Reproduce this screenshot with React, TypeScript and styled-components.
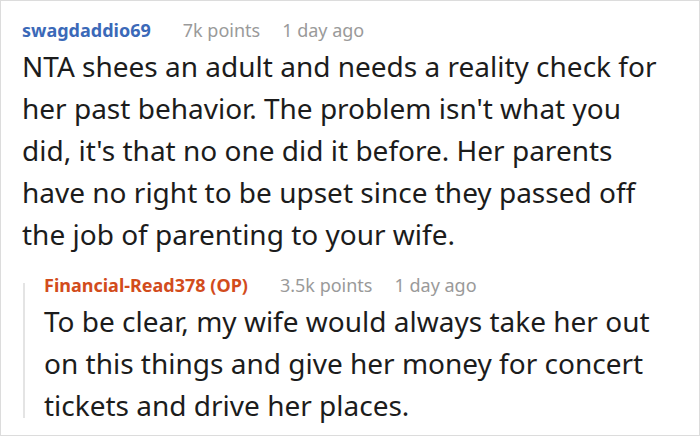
import React from "react";
import styled, { createGlobalStyle } from "styled-components";

const Global = createGlobalStyle`
  html, body { margin: 0; padding: 0; background: #fff; }
  * { box-sizing: border-box; }
`;

const Frame = styled.div`
  width: 700px;
  height: 436px;
  border: 1px solid #dcdcdc;
  padding: 14px 39px 0 21px;
  font-family: "Noto Sans", "Open Sans", sans-serif;
  background: #fff;
  overflow: hidden;
`;

const Header = styled.div`
  display: flex;
  align-items: baseline;
  height: 30px;
  line-height: 30px;
  font-size: 18px;
  white-space: nowrap;
`;

const User = styled.span<{ $op?: boolean }>`
  font-weight: 700;
  color: ${(p) => (p.$op ? "#d24c1c" : "#3b69b8")};
`;

const Meta = styled.span<{ $gap: number }>`
  color: #9a9a9a;
  margin-left: ${(p) => p.$gap}px;
`;

const Body = styled.p`
  margin: 0;
  font-size: 28px;
  line-height: 42px;
  color: #1c1c1c;
`;

const Reply = styled.div`
  display: flex;
  margin-top: 15px;
`;

const Rail = styled.div`
  width: 2px;
  flex: none;
  margin: 13px 0 8px 1px;
  background: #e4e4e4;
`;

const ReplyContent = styled.div`
  margin-left: 19px;
  flex: 1;
`;

export default function App() {
  return (
    <>
      <Global />
      <Frame>
        <Header>
          <User>swagdaddio69</User>
          <Meta $gap={32}>7k points</Meta>
          <Meta $gap={22}>1 day ago</Meta>
        </Header>
        <Body>
          NTA shees an adult and needs a reality check for her past behavior. The problem isn't what you
          did, it's that no one did it before. Her parents have no right to be upset since they passed off
          the job of parenting to your wife.
        </Body>
        <Reply>
          <Rail />
          <ReplyContent>
            <Header>
              <User $op>Financial-Read378 (OP)</User>
              <Meta $gap={32}>3.5k points</Meta>
              <Meta $gap={22}>1 day ago</Meta>
            </Header>
            <Body>
              To be clear, my wife would always take her out on this things and give her money for concert
              tickets and drive her places.
            </Body>
          </ReplyContent>
        </Reply>
      </Frame>
    </>
  );
}
